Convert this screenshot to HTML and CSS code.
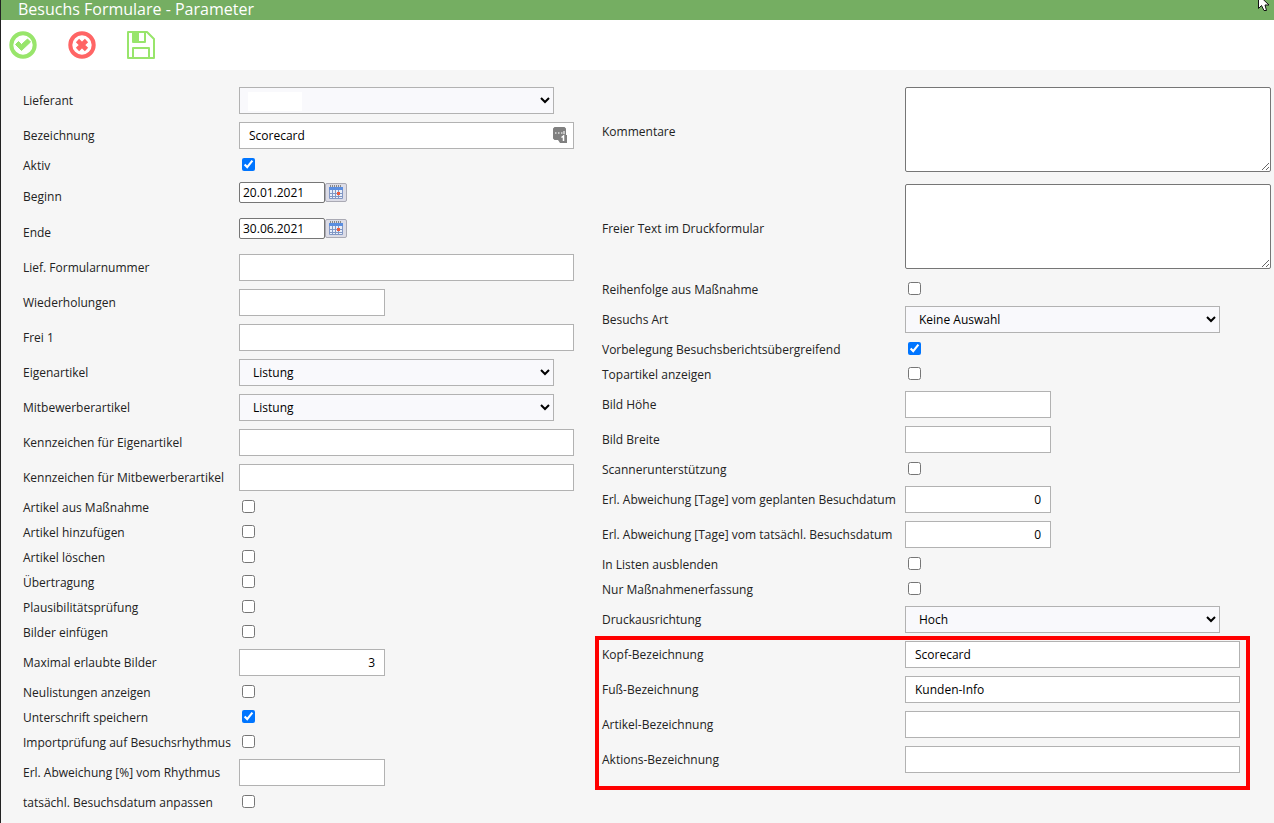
FILE: index.html
```html
<!DOCTYPE html>
<html lang="de">
<head>
<meta charset="utf-8">
<title>Besuchs Formulare - Parameter</title>
<link rel="stylesheet" href="styles.css">
</head>
<body>
<header class="titlebar">
  <h1 class="title">Besuchs Formulare - Parameter</h1>
  <svg class="pointer" width="14" height="12" viewBox="0 0 14 12" aria-hidden="true"><path d="M1.500-6V8.500L4.500 5.500L7 10.500H9.500L8 5H12L.5-6Z" fill="#fff" stroke="#111" stroke-width="1"/></svg>
</header>
<nav class="toolbar">
  <button class="tool" type="submit" form="params" aria-label="OK"><svg width="28" height="28" viewBox="0 0 28 28"><circle cx="14" cy="14" r="11.700" fill="none" stroke="#98e56b" stroke-width="4"/><path d="M6.500 13.500L9.500 10.500L12.500 13.500L18.500 8L21.500 11L12.500 19.500Z" fill="#98e56b" stroke="#98e56b" stroke-width="1" stroke-linejoin="round"/></svg></button>
  <button class="tool" type="button" aria-label="Abbrechen"><svg width="28" height="28" viewBox="0 0 28 28"><circle cx="14" cy="14" r="11.700" fill="none" stroke="#ff6565" stroke-width="4"/><path d="M9.500 9.500L18.500 18.500M18.500 9.500L9.500 18.500" stroke="#ff6565" stroke-width="4.600"/></svg></button>
  <button class="tool" type="button" aria-label="Speichern"><svg width="28" height="28" viewBox="0 0 28 28"><path d="M1 1H20L27 8V27H1ZM6 1V11H18V1M6 27V17H22V27" fill="none" stroke="#98e56b" stroke-width="2" stroke-linejoin="round"/><path d="M6 1H12V10H6Z" fill="#98e56b"/></svg></button>
</nav>
<form class="form" id="params">
  <div class="column">
    <div class="row"><label for="lieferant">Lieferant</label><span class="control"><select class="select" id="lieferant"><option></option></select><span class="blank"></span></span></div>
    <div class="row"><label for="bezeichnung">Bezeichnung</label><span class="control"><input class="text" id="bezeichnung" value="Scorecard"><svg class="manager" width="15" height="16" viewBox="0 0 15 16" aria-hidden="true"><path d="M1.500 0H11.500L13 1.500V8H14V16H7L5 13H1.500L0 11.500V1.500Z" fill="#808080"/><path d="M2 6h1.500M5 6h1.500M8 6h1.500M11 4v3" stroke="#ddd" stroke-width="1.500"/><path d="M8.500 10.500L10.500 9V14" fill="none" stroke="#fff" stroke-width="1.500"/></svg></span></div>
    <div class="row check"><label for="aktiv">Aktiv</label><input type="checkbox" id="aktiv" checked></div>
    <div class="row date"><label for="beginn">Beginn</label><span class="control"><input class="day" id="beginn" value="20.01.2021"><button class="picker" type="button" aria-label="Beginn wählen"><svg width="16" height="15" viewBox="0 0 16 15"><path d="M1.500 2.500H14.500V13.500H1.500Z" fill="#e8effa" stroke="#8297c4"/><path d="M1 2H15V5H1Z" fill="#5b8ee0"/><path d="M2.500 0V2M4.500 0V2M6.500 0V2M8.500 0V2M10.500 0V2M12.500 0V2" stroke="#888"/><path d="M4.500 5V14M7.500 5V14M10.500 5V14M1 8.500H15M1 11.500H15" stroke="#8297c4"/><path d="M9 7H12V10H9Z" fill="#ec5b3d"/></svg></button></span></div>
    <div class="row date"><label for="ende">Ende</label><span class="control"><input class="day" id="ende" value="30.06.2021"><button class="picker" type="button" aria-label="Ende wählen"><svg width="16" height="15" viewBox="0 0 16 15"><path d="M1.500 2.500H14.500V13.500H1.500Z" fill="#e8effa" stroke="#8297c4"/><path d="M1 2H15V5H1Z" fill="#5b8ee0"/><path d="M2.500 0V2M4.500 0V2M6.500 0V2M8.500 0V2M10.500 0V2M12.500 0V2" stroke="#888"/><path d="M4.500 5V14M7.500 5V14M10.500 5V14M1 8.500H15M1 11.500H15" stroke="#8297c4"/><path d="M9 7H12V10H9Z" fill="#ec5b3d"/></svg></button></span></div>
    <div class="row"><label for="nummer">Lief. Formularnummer</label><input class="text" id="nummer"></div>
    <div class="row"><label for="wdh">Wiederholungen</label><input class="text short" id="wdh"></div>
    <div class="row"><label for="frei">Frei 1</label><input class="text" id="frei"></div>
    <div class="row"><label for="eigen">Eigenartikel</label><select class="select" id="eigen"><option>Listung</option></select></div>
    <div class="row"><label for="mitbewerber">Mitbewerberartikel</label><select class="select" id="mitbewerber"><option>Listung</option></select></div>
    <div class="row"><label for="kz-eigen">Kennzeichen für Eigenartikel</label><input class="text" id="kz-eigen"></div>
    <div class="row"><label for="kz-mit">Kennzeichen für Mitbewerberartikel</label><input class="text" id="kz-mit"></div>
    <div class="row check"><label for="massnahme">Artikel aus Maßnahme</label><input type="checkbox" id="massnahme"></div>
    <div class="row check"><label for="hinzu">Artikel hinzufügen</label><input type="checkbox" id="hinzu"></div>
    <div class="row check"><label for="loeschen">Artikel löschen</label><input type="checkbox" id="loeschen"></div>
    <div class="row check"><label for="uebertragung">Übertragung</label><input type="checkbox" id="uebertragung"></div>
    <div class="row check"><label for="plausi">Plausibilitätsprüfung</label><input type="checkbox" id="plausi"></div>
    <div class="row check"><label for="bilder">Bilder einfügen</label><input type="checkbox" id="bilder"></div>
    <div class="row"><label for="maxbilder">Maximal erlaubte Bilder</label><input class="text short" id="maxbilder" value="3"></div>
    <div class="row check"><label for="neu">Neulistungen anzeigen</label><input type="checkbox" id="neu"></div>
    <div class="row check"><label for="unterschrift">Unterschrift speichern</label><input type="checkbox" id="unterschrift" checked></div>
    <div class="row check"><label for="import">Importprüfung auf Besuchsrhythmus</label><input type="checkbox" id="import"></div>
    <div class="row"><label for="rhythmus">Erl. Abweichung [%] vom Rhythmus</label><input class="text short" id="rhythmus"></div>
    <div class="row check"><label for="anpassen">tatsächl. Besuchsdatum anpassen</label><input type="checkbox" id="anpassen"></div>
  </div>
  <div class="column wide">
    <div class="row"><label for="kommentare">Kommentare</label><textarea class="area" id="kommentare"></textarea></div>
    <div class="row"><label for="freitext">Freier Text im Druckformular</label><textarea class="area" id="freitext"></textarea></div>
    <div class="row check"><label for="reihenfolge">Reihenfolge aus Maßnahme</label><input type="checkbox" id="reihenfolge"></div>
    <div class="row"><label for="art">Besuchs Art</label><select class="select" id="art"><option>Keine Auswahl</option></select></div>
    <div class="row check"><label for="vorbelegung">Vorbelegung Besuchsberichtsübergreifend</label><input type="checkbox" id="vorbelegung" checked></div>
    <div class="row check"><label for="top">Topartikel anzeigen</label><input type="checkbox" id="top"></div>
    <div class="row"><label for="hoehe">Bild Höhe</label><input class="text short" id="hoehe"></div>
    <div class="row"><label for="breite">Bild Breite</label><input class="text short" id="breite"></div>
    <div class="row check"><label for="scanner">Scannerunterstützung</label><input type="checkbox" id="scanner"></div>
    <div class="row"><label for="geplant">Erl. Abweichung [Tage] vom geplanten Besuchdatum</label><input class="text short" id="geplant" value="0"></div>
    <div class="row"><label for="tats">Erl. Abweichung [Tage] vom tatsächl. Besuchsdatum</label><input class="text short" id="tats" value="0"></div>
    <div class="row check"><label for="ausblenden">In Listen ausblenden</label><input type="checkbox" id="ausblenden"></div>
    <div class="row check"><label for="nur">Nur Maßnahmenerfassung</label><input type="checkbox" id="nur"></div>
    <div class="row"><label for="druck">Druckausrichtung</label><select class="select" id="druck"><option>Hoch</option></select></div>
    <div class="marked">
      <div class="row"><label for="kopf">Kopf-Bezeichnung</label><input class="text" id="kopf" value="Scorecard"></div>
      <div class="row"><label for="fuss">Fuß-Bezeichnung</label><input class="text" id="fuss" value="Kunden-Info"></div>
      <div class="row"><label for="artikel">Artikel-Bezeichnung</label><input class="text" id="artikel"></div>
      <div class="row"><label for="aktion">Aktions-Bezeichnung</label><input class="text" id="aktion"></div>
    </div>
  </div>
</form>
</body>
</html>
```
FILE: styles.css
```css
* { box-sizing: border-box; }
body {
  margin: 0;
  min-height: 100vh;
  border-left: 1px solid #222;
  background: #f6f6f6;
  color: #222;
  font: 12px/17px "Open Sans", "Noto Sans", sans-serif;
}
input, select, textarea, button { font: inherit; color: #000; margin: 0; }

.titlebar {
  position: relative;
  height: 20px;
  padding-left: 17px;
  background: #75ae62;
}
.title { margin: 0; color: #fff; font-size: 16px; font-weight: 400; line-height: 18px; }
.pointer { position: absolute; top: 0; right: 3px; }

.toolbar { display: flex; gap: 31px; height: 50px; padding: 11px 8px; background: #fff; }
.tool { display: block; padding: 0; border: 0; background: none; height: 28px; }
.tool svg { display: block; }

.form {
  display: grid;
  grid-template-columns: minmax(0, 579fr) minmax(0, 670fr);
  padding: 13px 3px 8px 21px;
}
.row {
  display: grid;
  grid-template-columns: 217px minmax(0, 1fr);
  align-items: center;
  padding: 4px 0;
}
.wide .row { grid-template-columns: 304px minmax(0, 1fr); }
.row label { padding-left: 1px; white-space: nowrap; }

.control { position: relative; display: flex; align-items: center; }
.text, .select {
  width: 100%;
  height: 27px;
  border: 1px solid #b2b2b2;
  border-radius: 0;
}
.text { max-width: 335px; padding: 0 9px; background: #fff; }
.short { max-width: 146px; text-align: right; }
.select { max-width: 315px; padding: 0 0 0 9px; background: #f9f9fc; }
.blank { position: absolute; left: 9px; top: 5px; width: 54px; height: 19px; background: #fff; }
.manager { position: absolute; left: 314px; top: 5px; }

.check { height: 25px; padding: 0; }
.check input { width: 13px; height: 13px; margin: 0 3px 2px; }

.date { height: 36px; align-items: start; }
.date label { align-self: center; }
.day { width: 86px; height: 21px; padding: 0 3px; border: 1px solid #767676; border-radius: 2px; background: #fff; }
.picker {
  display: flex;
  align-items: center;
  justify-content: center;
  width: 22px;
  height: 19px;
  padding: 0;
  border: 1px solid #aaaab4;
  border-radius: 2px;
  background: #dcdce6;
}

.area {
  display: block;
  width: 100%;
  max-width: 366px;
  height: 85px;
  margin-bottom: 4px;
  border: 1px solid #767676;
  border-radius: 2px;
  background: #fff;
}

.marked { position: relative; }
.marked::after {
  content: "";
  position: absolute;
  inset: -1px 21px -13px -6px;
  border: 4px solid #f00;
  pointer-events: none;
}
```
